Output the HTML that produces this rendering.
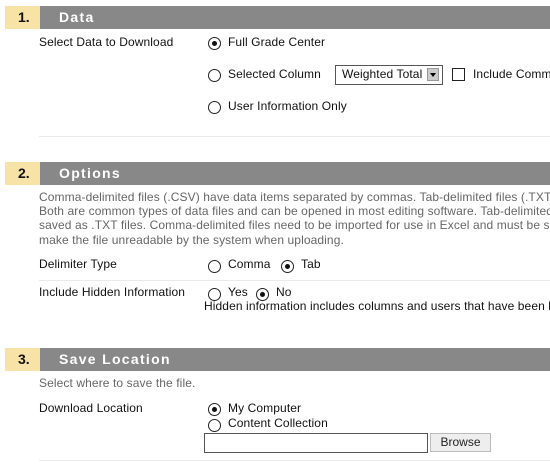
<!DOCTYPE html>
<html style="overflow:hidden"><head><style>
body{margin:0;width:550px;height:470px;background:#fff;position:relative;overflow:hidden;font-family:"Liberation Sans",sans-serif;font-size:12px;color:#111}
.a{position:absolute;white-space:nowrap;line-height:14px;letter-spacing:0.1px}
.num{position:absolute;left:5px;width:35px;height:23px;background:#f6e3a5;font-weight:bold;font-size:14px;line-height:23px;text-indent:13px;color:#111}
.bar{position:absolute;left:40px;right:0;height:23px;background:#888;color:#fff;font-weight:bold;font-size:14px;line-height:23px;padding-left:19px;letter-spacing:1.3px}
.g{color:#666}
.ln{position:absolute;left:39px;right:0;height:1px;background:#eaeaea}
.r{position:absolute;width:11px;height:11px;border:1px solid #222;border-radius:50%;background:#fff}
.r.on::after{content:"";position:absolute;left:3px;top:3px;width:5px;height:5px;border-radius:50%;background:#111}
</style></head><body>
<div class="num" style="top:6px">1.</div><div class="bar" style="top:6px">Data</div>
<div class="a" style="left:39px;top:35px">Select Data to Download</div>
<div class="r on" style="left:208px;top:37px"></div><div class="a" style="left:228px;top:35px">Full Grade Center</div>
<div class="r" style="left:208px;top:69px"></div><div class="a" style="left:228px;top:67px">Selected Column</div>
<div style="position:absolute;left:335px;top:65px;width:106px;height:18px;border:1px solid #555;background:#fff"></div>
<div class="a" style="left:342px;top:67px">Weighted Total</div>
<div style="position:absolute;left:427px;top:68px;width:12px;height:13px;background:#ccc;border:1px solid #999;box-sizing:border-box"></div>
<div style="position:absolute;left:430px;top:73px;width:0;height:0;border-left:3px solid transparent;border-right:3px solid transparent;border-top:4px solid #000"></div>
<div style="position:absolute;left:452px;top:68px;width:11px;height:11px;border:1px solid #222"></div>
<div class="a" style="left:473px;top:67px">Include Comments</div>
<div class="r" style="left:208px;top:101px"></div><div class="a" style="left:228px;top:99px">User Information Only</div>
<div class="ln" style="top:136px"></div>

<div class="num" style="top:162px">2.</div><div class="bar" style="top:162px">Options</div>
<div class="a g" style="left:39px;top:190px">Comma-delimited files (.CSV) have data items separated by commas. Tab-delimited files (.TXT) have data items separated by tabs.</div>
<div class="a g" style="left:39px;top:204px">Both are common types of data files and can be opened in most editing software. Tab-delimited files open in Excel automatically and</div>
<div class="a g" style="left:39px;top:218px">saved as .TXT files. Comma-delimited files need to be imported for use in Excel and must be saved carefully, as improper use can</div>
<div class="a g" style="left:39px;top:233px">make the file unreadable by the system when uploading.</div>
<div class="a" style="left:39px;top:257px">Delimiter Type</div>
<div class="r" style="left:208px;top:260px"></div><div class="a" style="left:228px;top:257px">Comma</div>
<div class="r on" style="left:281px;top:260px"></div><div class="a" style="left:301px;top:257px">Tab</div>
<div class="ln" style="top:280px"></div>
<div class="a" style="left:39px;top:285px">Include Hidden Information</div>
<div class="r" style="left:208px;top:288px"></div><div class="a" style="left:228px;top:285px">Yes</div>
<div class="r on" style="left:256px;top:288px"></div><div class="a" style="left:276px;top:285px">No</div>
<div class="a" style="left:204px;top:299px">Hidden information includes columns and users that have been hidden.</div>

<div class="num" style="top:348px">3.</div><div class="bar" style="top:348px">Save Location</div>
<div class="a g" style="left:39px;top:376px">Select where to save the file.</div>
<div class="a" style="left:39px;top:401px">Download Location</div>
<div class="r on" style="left:208px;top:403px"></div><div class="a" style="left:228px;top:401px">My Computer</div>
<div class="r" style="left:208px;top:419px"></div><div class="a" style="left:228px;top:416px">Content Collection</div>
<div style="position:absolute;left:204px;top:433px;width:222px;height:18px;border:1px solid #555;background:#fff"></div>
<div style="position:absolute;left:430px;top:433px;width:61px;height:19px;border:1px solid #bbb;background:#eee;box-sizing:border-box;text-align:center;line-height:17px;color:#222">Browse</div>
<div class="ln" style="top:460px"></div>
</body></html>
